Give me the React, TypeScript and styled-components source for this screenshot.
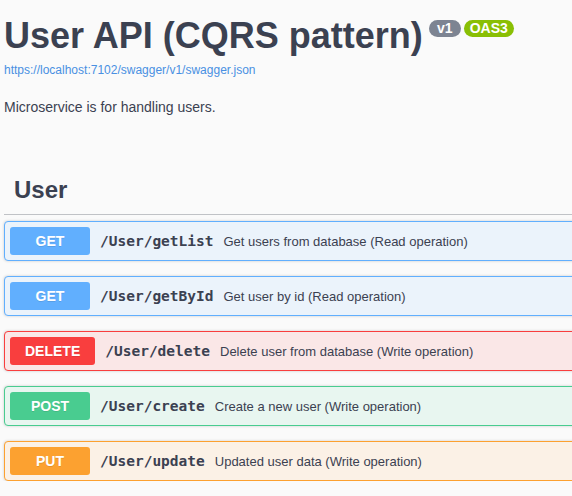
import React from "react";
import styled, { createGlobalStyle } from "styled-components";

const GlobalStyle = createGlobalStyle`
  html, body {
    margin: 0;
    padding: 0;
    background: #fafafa;
    overflow: hidden;
  }
  body {
    font-family: "Liberation Sans", Arial, sans-serif;
    color: #3b4151;
  }
`;

const Page = styled.div`
  width: 660px;
  padding: 0 0 0 4px;
  box-sizing: border-box;
`;

const Info = styled.section`
  display: flex;
  flex-direction: column;
  align-items: flex-start;
  padding-top: 15px;
`;

const TitleRow = styled.div`
  display: flex;
  align-items: flex-start;
`;

const Title = styled.h2`
  margin: 0;
  font-size: 36px;
  line-height: 42px;
  font-weight: 700;
  color: #3b4151;
`;

const Badge = styled.span<{ $bg: string; $ml: number }>`
  display: inline-block;
  margin: 5px 0 0 ${(p) => p.$ml}px;
  padding: 2px 6px;
  min-width: 20px;
  text-align: center;
  border-radius: 57px;
  background: ${(p) => p.$bg};
  color: #fff;
  font-size: 14px;
  line-height: 13px;
  font-weight: 700;
`;

const SpecLink = styled.a`
  margin-top: 6px;
  font-size: 12px;
  line-height: 14px;
  color: #4990e2;
  text-decoration: none;
`;

const Description = styled.p`
  margin: 20px 0 0;
  font-size: 14px;
  line-height: 20px;
  color: #3b4151;
`;

const TagHeading = styled.h4`
  margin: 49px 0 6px;
  padding: 10px 20px 10px 10px;
  font-size: 24px;
  line-height: 28px;
  font-weight: 700;
  color: #3b4151;
  border-bottom: 1px solid rgba(59, 65, 81, 0.3);
`;

const OpList = styled.div`
  display: flex;
  flex-direction: column;
  gap: 15px;
`;

const OpBlock = styled.div<{ $color: string; $bg: string }>`
  display: flex;
  align-items: center;
  padding: 5px;
  border: 1px solid ${(p) => p.$color};
  border-radius: 4px;
  background: ${(p) => p.$bg};
  box-shadow: 0 0 3px rgba(0, 0, 0, 0.19);
`;

const Method = styled.span<{ $color: string }>`
  min-width: 80px;
  padding: 6px 15px;
  box-sizing: border-box;
  border-radius: 3px;
  background: ${(p) => p.$color};
  color: #fff;
  font-size: 14px;
  line-height: 16px;
  font-weight: 700;
  text-align: center;
  text-shadow: 0 1px 0 rgba(0, 0, 0, 0.1);
`;

const Path = styled.span`
  padding: 0 10px;
  font-family: "DejaVu Sans Mono", "Liberation Mono", monospace;
  font-size: 14.5px;
  font-weight: 700;
  color: #3b4151;
`;

const Summary = styled.span`
  font-size: 13px;
  color: #3b4151;
`;

type Op = {
  method: string;
  path: string;
  summary: string;
  color: string;
  bg: string;
};

const ops: Op[] = [
  { method: "GET", path: "/User/getList", summary: "Get users from database (Read operation)", color: "#61affe", bg: "#ebf3fb" },
  { method: "GET", path: "/User/getById", summary: "Get user by id (Read operation)", color: "#61affe", bg: "#ebf3fb" },
  { method: "DELETE", path: "/User/delete", summary: "Delete user from database (Write operation)", color: "#f93e3e", bg: "#fae7e7" },
  { method: "POST", path: "/User/create", summary: "Create a new user (Write operation)", color: "#49cc90", bg: "#e8f6f0" },
  { method: "PUT", path: "/User/update", summary: "Updated user data (Write operation)", color: "#fca130", bg: "#fbf1e6" },
];

export default function App() {
  return (
    <>
      <GlobalStyle />
      <Page>
        <Info>
          <TitleRow>
            <Title>User API (CQRS pattern)</Title>
            <Badge $bg="#7d8492" $ml={6}>v1</Badge>
            <Badge $bg="#89bf04" $ml={3}>OAS3</Badge>
          </TitleRow>
          <SpecLink href="#">https://localhost:7102/swagger/v1/swagger.json</SpecLink>
          <Description>Microservice is for handling users.</Description>
        </Info>
        <TagHeading>User</TagHeading>
        <OpList>
          {ops.map((op) => (
            <OpBlock key={op.path} $color={op.color} $bg={op.bg}>
              <Method $color={op.color}>{op.method}</Method>
              <Path>{op.path}</Path>
              <Summary>{op.summary}</Summary>
            </OpBlock>
          ))}
        </OpList>
      </Page>
    </>
  );
}
